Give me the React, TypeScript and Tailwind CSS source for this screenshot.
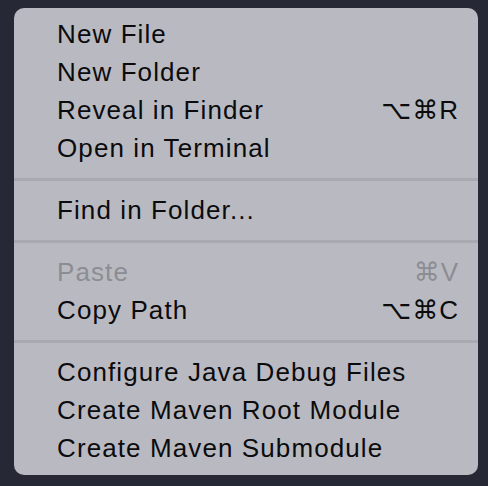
const FONT = "font-['Liberation_Sans','DejaVu_Sans',sans-serif]"

type Item = { label: string; shortcut?: string; disabled?: boolean }

const GROUPS: Item[][] = [
  [
    { label: 'New File' },
    { label: 'New Folder' },
    { label: 'Reveal in Finder', shortcut: '⌥⌘R' },
    { label: 'Open in Terminal' },
  ],
  [{ label: 'Find in Folder...' }],
  [
    { label: 'Paste', shortcut: '⌘V', disabled: true },
    { label: 'Copy Path', shortcut: '⌥⌘C' },
  ],
  [
    { label: 'Configure Java Debug Files' },
    { label: 'Create Maven Root Module' },
    { label: 'Create Maven Submodule' },
  ],
]

function Row({ item }: { item: Item }) {
  return (
    <div
      className={`flex h-[38px] items-center justify-between pl-[43px] pr-[20px] text-[26px] tracking-[1.1px] ${
        item.disabled ? 'text-[#8c8d93]' : 'text-[#0b0b0d]'
      }`}
    >
      <span>{item.label}</span>
      {item.shortcut && <span className="-mr-[1px] tracking-[1px]">{item.shortcut}</span>}
    </div>
  )
}

export default function App() {
  return (
    <div className={`h-[486px] w-[488px] bg-[#262835] pl-[14px] pr-[10px] pt-[8px] ${FONT}`}>
      <div className="flex flex-col rounded-[10px] bg-[#b9bac1] pb-[8px] pt-[7px]">
        {GROUPS.map((g, gi) => (
          <div key={gi}>
            {gi > 0 && <div className="mb-[10px] mt-[11px] h-[3px] bg-[#a9aab1]" />}
            {g.map((it) => (
              <Row key={it.label} item={it} />
            ))}
          </div>
        ))}
      </div>
    </div>
  )
}
